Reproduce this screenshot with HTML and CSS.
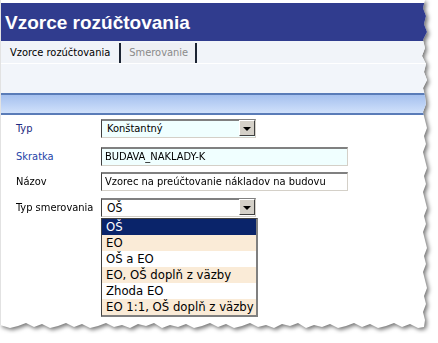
FILE: index.html
```html
<!DOCTYPE html>
<html>
<head>
    <title>Vzorce rozúčtovania</title>
    <link rel="stylesheet" href="styles.css">
</head>
<body>
    <div class="sheet">
        <div class="paper">
            <div class="page-title">Vzorce rozúčtovania</div>
            <div class="tabs">
                <div class="tab active">Vzorce rozúčtovania</div>
                <div class="tab">Smerovanie</div>
            </div>
            <div class="toolbar"></div>
            <div class="band"></div>

            <div class="form">
                <!-- Typ -->
                <div class="row row-typ">
                    <div class="label label-typ">Typ</div>
                    <div class="combo required">
                        <span class="combo-text">Konštantný</span>
                        <span class="combo-btn"><i></i></span>
                    </div>
                </div>
                <!-- Skratka -->
                <div class="row row-skratka">
                    <div class="label label-skratka">Skratka</div>
                    <div class="field required wide">BUDAVA_NAKLADY-K</div>
                </div>
                <!-- Nazov -->
                <div class="row row-nazov">
                    <div class="label">Názov</div>
                    <div class="field wide">Vzorec na preúčtovanie nákladov na budovu</div>
                </div>
                <!-- Typ smerovania -->
                <div class="row row-smer">
                    <div class="label">Typ smerovania</div>
                    <div class="combo open">
                        <span class="combo-text big">OŠ</span>
                        <span class="combo-btn"><i></i></span>
                        <ul class="combo-list">
                            <li class="selected">OŠ</li>
                            <li class="alt">EO</li>
                            <li>OŠ a EO</li>
                            <li class="alt">EO, OŠ doplň z väzby</li>
                            <li>Zhoda EO</li>
                            <li class="alt">EO 1:1, OŠ doplň z väzby</li>
                        </ul>
                    </div>
                </div>
            </div>
        </div>
    </div>
</body>
</html>
```

FILE: styles.css
```css
body {
    margin: 0;
    background-color: #fff;
    font-family: "Liberation Sans", Arial, sans-serif;
}
.sheet {
    width: 432px;
    height: 334px;
    filter: drop-shadow(2px 2px 2px rgba(0, 0, 0, 0.55));
}
.paper {
    width: 428px;
    height: 330px;
    background-color: #fff;
    box-sizing: border-box;
    border-left: 1px solid #e2e2e2;
    padding-top: 3px;
    clip-path: polygon(0 0, 425px 0, 423px 8px, 426px 16px, 424px 24px, 427px 32px, 423px 40px, 425px 48px, 422px 56px, 426px 64px, 424px 72px, 427px 80px, 423px 88px, 425px 96px, 426px 104px, 423px 112px, 425px 120px, 427px 128px, 424px 136px, 426px 144px, 423px 152px, 425px 160px, 427px 168px, 424px 176px, 426px 184px, 423px 192px, 425px 200px, 427px 208px, 424px 216px, 426px 224px, 423px 232px, 425px 240px, 427px 248px, 424px 256px, 426px 264px, 423px 272px, 425px 280px, 427px 288px, 424px 296px, 426px 304px, 423px 312px, 425px 320px, 424px 327px, 418px 328px, 410px 324px, 402px 327px, 394px 323px, 386px 326px, 378px 328px, 370px 324px, 362px 327px, 354px 323px, 346px 326px, 338px 328px, 330px 324px, 322px 327px, 314px 325px, 306px 328px, 298px 323px, 290px 326px, 282px 324px, 274px 328px, 266px 325px, 258px 327px, 250px 323px, 242px 326px, 234px 328px, 226px 324px, 218px 327px, 210px 323px, 202px 326px, 194px 328px, 186px 324px, 178px 327px, 170px 325px, 162px 328px, 154px 323px, 146px 326px, 138px 324px, 130px 328px, 122px 325px, 114px 327px, 106px 323px, 98px 326px, 90px 328px, 82px 324px, 74px 327px, 66px 323px, 58px 326px, 50px 328px, 42px 324px, 34px 327px, 26px 323px, 18px 326px, 10px 328px, 0 325px);
}
.page-title {
    height: 38px;
    line-height: 40px;
    padding-left: 4px;
    background-color: #303c8e;
    color: #fff;
    font-weight: bold;
    font-size: 19px;
}
.tabs {
    height: 22px;
    display: flex;
    align-items: flex-end;
    background-color: #f1f4f9;
    font-family: "DejaVu Sans", sans-serif;
    font-stretch: condensed;
    font-size: 11px;
}
.tab {
    height: 20px;
    line-height: 20px;
    padding: 0 7px 0 8px;
    border-right: 2px solid #1c2433;
    color: #8a8a8a;
    background-color: #eef0f4;
}
.tab.active {
    color: #000;
    background-color: #f1f4f9;
    padding: 0 9px 0 9px;
}
.toolbar {
    height: 29px;
    background-color: #f2f5fa;
    border-top: 1px solid #fff;
}
.band {
    height: 18px;
    border-top: 2px solid #5a7cb8;
    border-bottom: 2px solid #5a7cb8;
    background: linear-gradient(#a5c0ee, #d0e1fb);
}
.form {
    padding-top: 4px;
    font-family: "DejaVu Sans", sans-serif;
    font-stretch: condensed;
    font-size: 11px;
}
.row {
    display: flex;
    align-items: center;
    height: 19px;
}
.row-skratka { margin-top: 9px; }
.row-nazov { margin-top: 6px; }
.row-smer { margin-top: 7px; }
.label {
    width: 85px;
    padding-left: 15px;
    color: #000;
}
.label-typ { color: #1c2a80; }
.label-skratka { color: #2444a8; }
.field, .combo {
    height: 19px;
    box-sizing: border-box;
    border-top: 2px solid #808080;
    border-left: 1px solid #404040;
    border-right: 1px solid #d4d0c8;
    border-bottom: 1px solid #d4d0c8;
    background-color: #fff;
    line-height: 16px;
    padding-left: 3px;
    color: #000;
    white-space: nowrap;
    overflow: hidden;
}
.field.wide { width: 247px; }
.required { background-color: #f0ffff; }
.combo {
    position: relative;
    width: 155px;
    overflow: visible;
    display: flex;
}
.combo-text {
    flex: 1;
    padding-left: 2px;
}
.combo-text.big { font-size: 12px; }
.combo-btn {
    width: 16px;
    height: 16px;
    box-sizing: border-box;
    margin-top: -1px;
    background-color: #d4d0c8;
    border-top: 1px solid #fff;
    border-left: 1px solid #fff;
    border-right: 1px solid #404040;
    border-bottom: 1px solid #404040;
    display: flex;
    align-items: center;
    justify-content: center;
}
.combo-btn i {
    width: 0;
    height: 0;
    border-left: 4px solid transparent;
    border-right: 4px solid transparent;
    border-top: 4px solid #000;
    margin-top: 1px;
}
.combo-list {
    position: absolute;
    left: -1px;
    top: 18px;
    width: 154px;
    margin: 0;
    padding: 0;
    list-style: none;
    background-color: #fff;
    border: 1px solid #404040;
    border-right: 2px solid #808080;
    border-bottom: 2px solid #808080;
    font-size: 13px;
}
.combo-list li {
    height: 16px;
    line-height: 16px;
    padding-left: 4px;
    white-space: nowrap;
    overflow: hidden;
}
.combo-list li.alt { background-color: #faebd7; }
.combo-list li.selected {
    background-color: #0a246a;
    color: #fff;
}
```
